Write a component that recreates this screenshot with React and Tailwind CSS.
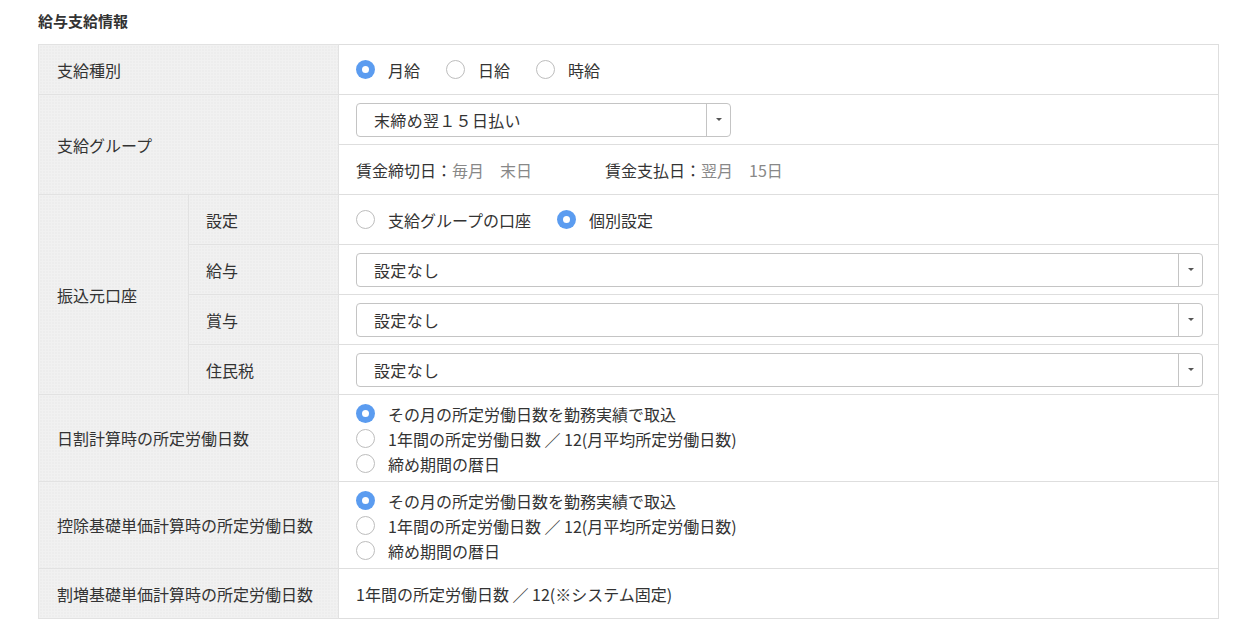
import React from 'react'

const labelBg =
  'bg-[#f1f1f1] bg-[radial-gradient(#e2e2e2_0.6px,transparent_0.8px)] bg-[length:3px_3px]'

const Radio = ({ checked, label }) => (
  <span className="inline-flex items-center">
    {checked ? (
      <span className="shrink-0 w-[19px] h-[19px] rounded-full bg-[#5b9cf0] flex items-center justify-center">
        <span className="w-[7px] h-[7px] rounded-full bg-white" />
      </span>
    ) : (
      <span className="shrink-0 w-[19px] h-[19px] rounded-full border border-[#bdbdbd] bg-white" />
    )}
    <span className="ml-[13px]">{label}</span>
  </span>
)

const Select = ({ value, wide }) => (
  <div
    className={`flex h-[34px] border border-[#c4c4c4] rounded-[4px] bg-white ${
      wide ? 'w-[847px]' : 'w-[375px]'
    }`}
  >
    <div className="flex-1 flex items-center pl-[17px] tracking-[0.02em]">{value}</div>
    <div className="w-[24px] border-l border-[#c4c4c4] flex items-center justify-center">
      <span className="w-0 h-0 border-l-[3px] border-r-[3px] border-t-[3px] border-l-transparent border-r-transparent border-t-[#555]" />
    </div>
  </div>
)

const RadioList = ({ items, checkedIndex }) => (
  <div className="flex flex-col pt-[6px] pb-[5px]">
    {items.map((item, i) => (
      <div key={i} className="h-[25px] flex items-center">
        <Radio checked={i === checkedIndex} label={item} />
      </div>
    ))}
  </div>
)

const dayOptions = [
  'その月の所定労働日数を勤務実績で取込',
  '1年間の所定労働日数 ／ 12(月平均所定労働日数)',
  '締め期間の暦日',
]

export default function App() {
  const th = `${labelBg} border border-[#e2e2e2] text-left font-normal align-middle`
  const td = 'border border-[#dedede] px-[17px] align-middle bg-white'

  return (
    <div
      className="min-h-screen bg-white text-[#333] text-[16px] pl-[38px] pr-[33px] pt-[10px]"
      style={{ fontFamily: '"Noto Sans CJK JP", "Noto Sans", sans-serif' }}
    >
      <h2 className="text-[15px] leading-[21px] font-bold mb-[13px]">給与支給情報</h2>

      <table className="w-full border-collapse border border-[#dcdcdc] table-fixed">
        <colgroup>
          <col className="w-[150px]" />
          <col className="w-[150px]" />
          <col />
        </colgroup>
        <tbody>
          <tr className="h-[50px]">
            <th colSpan={2} className={`${th} pl-[18px]`}>支給種別</th>
            <td className={td}>
              <div className="flex items-center gap-[26px]">
                <Radio checked label="月給" />
                <Radio label="日給" />
                <Radio label="時給" />
              </div>
            </td>
          </tr>

          <tr className="h-[50px]">
            <th rowSpan={2} colSpan={2} className={`${th} pl-[18px]`}>支給グループ</th>
            <td className={td}>
              <Select value="末締め翌１５日払い" />
            </td>
          </tr>
          <tr className="h-[50px]">
            <td className={td}>
              <div className="flex items-center">
                <span>
                  賃金締切日：<span className="text-[#888]">毎月　末日</span>
                </span>
                <span className="ml-[73px]">
                  賃金支払日：<span className="text-[#888]">翌月　15日</span>
                </span>
              </div>
            </td>
          </tr>

          <tr className="h-[50px]">
            <th rowSpan={4} className={`${th} pl-[18px]`}>振込元口座</th>
            <th className={`${th} pl-[17px]`}>設定</th>
            <td className={td}>
              <div className="flex items-center gap-[26px]">
                <Radio label="支給グループの口座" />
                <Radio checked label="個別設定" />
              </div>
            </td>
          </tr>
          <tr className="h-[50px]">
            <th className={`${th} pl-[17px]`}>給与</th>
            <td className={td}>
              <Select value="設定なし" wide />
            </td>
          </tr>
          <tr className="h-[50px]">
            <th className={`${th} pl-[17px]`}>賞与</th>
            <td className={td}>
              <Select value="設定なし" wide />
            </td>
          </tr>
          <tr className="h-[50px]">
            <th className={`${th} pl-[17px]`}>住民税</th>
            <td className={td}>
              <Select value="設定なし" wide />
            </td>
          </tr>

          <tr>
            <th colSpan={2} className={`${th} pl-[18px]`}>日割計算時の所定労働日数</th>
            <td className={td}>
              <RadioList items={dayOptions} checkedIndex={0} />
            </td>
          </tr>
          <tr>
            <th colSpan={2} className={`${th} pl-[18px]`}>控除基礎単価計算時の所定労働日数</th>
            <td className={td}>
              <RadioList items={dayOptions} checkedIndex={0} />
            </td>
          </tr>
          <tr className="h-[50px]">
            <th colSpan={2} className={`${th} pl-[18px]`}>割増基礎単価計算時の所定労働日数</th>
            <td className={td}>1年間の所定労働日数 ／ 12(※システム固定)</td>
          </tr>
        </tbody>
      </table>
    </div>
  )
}
